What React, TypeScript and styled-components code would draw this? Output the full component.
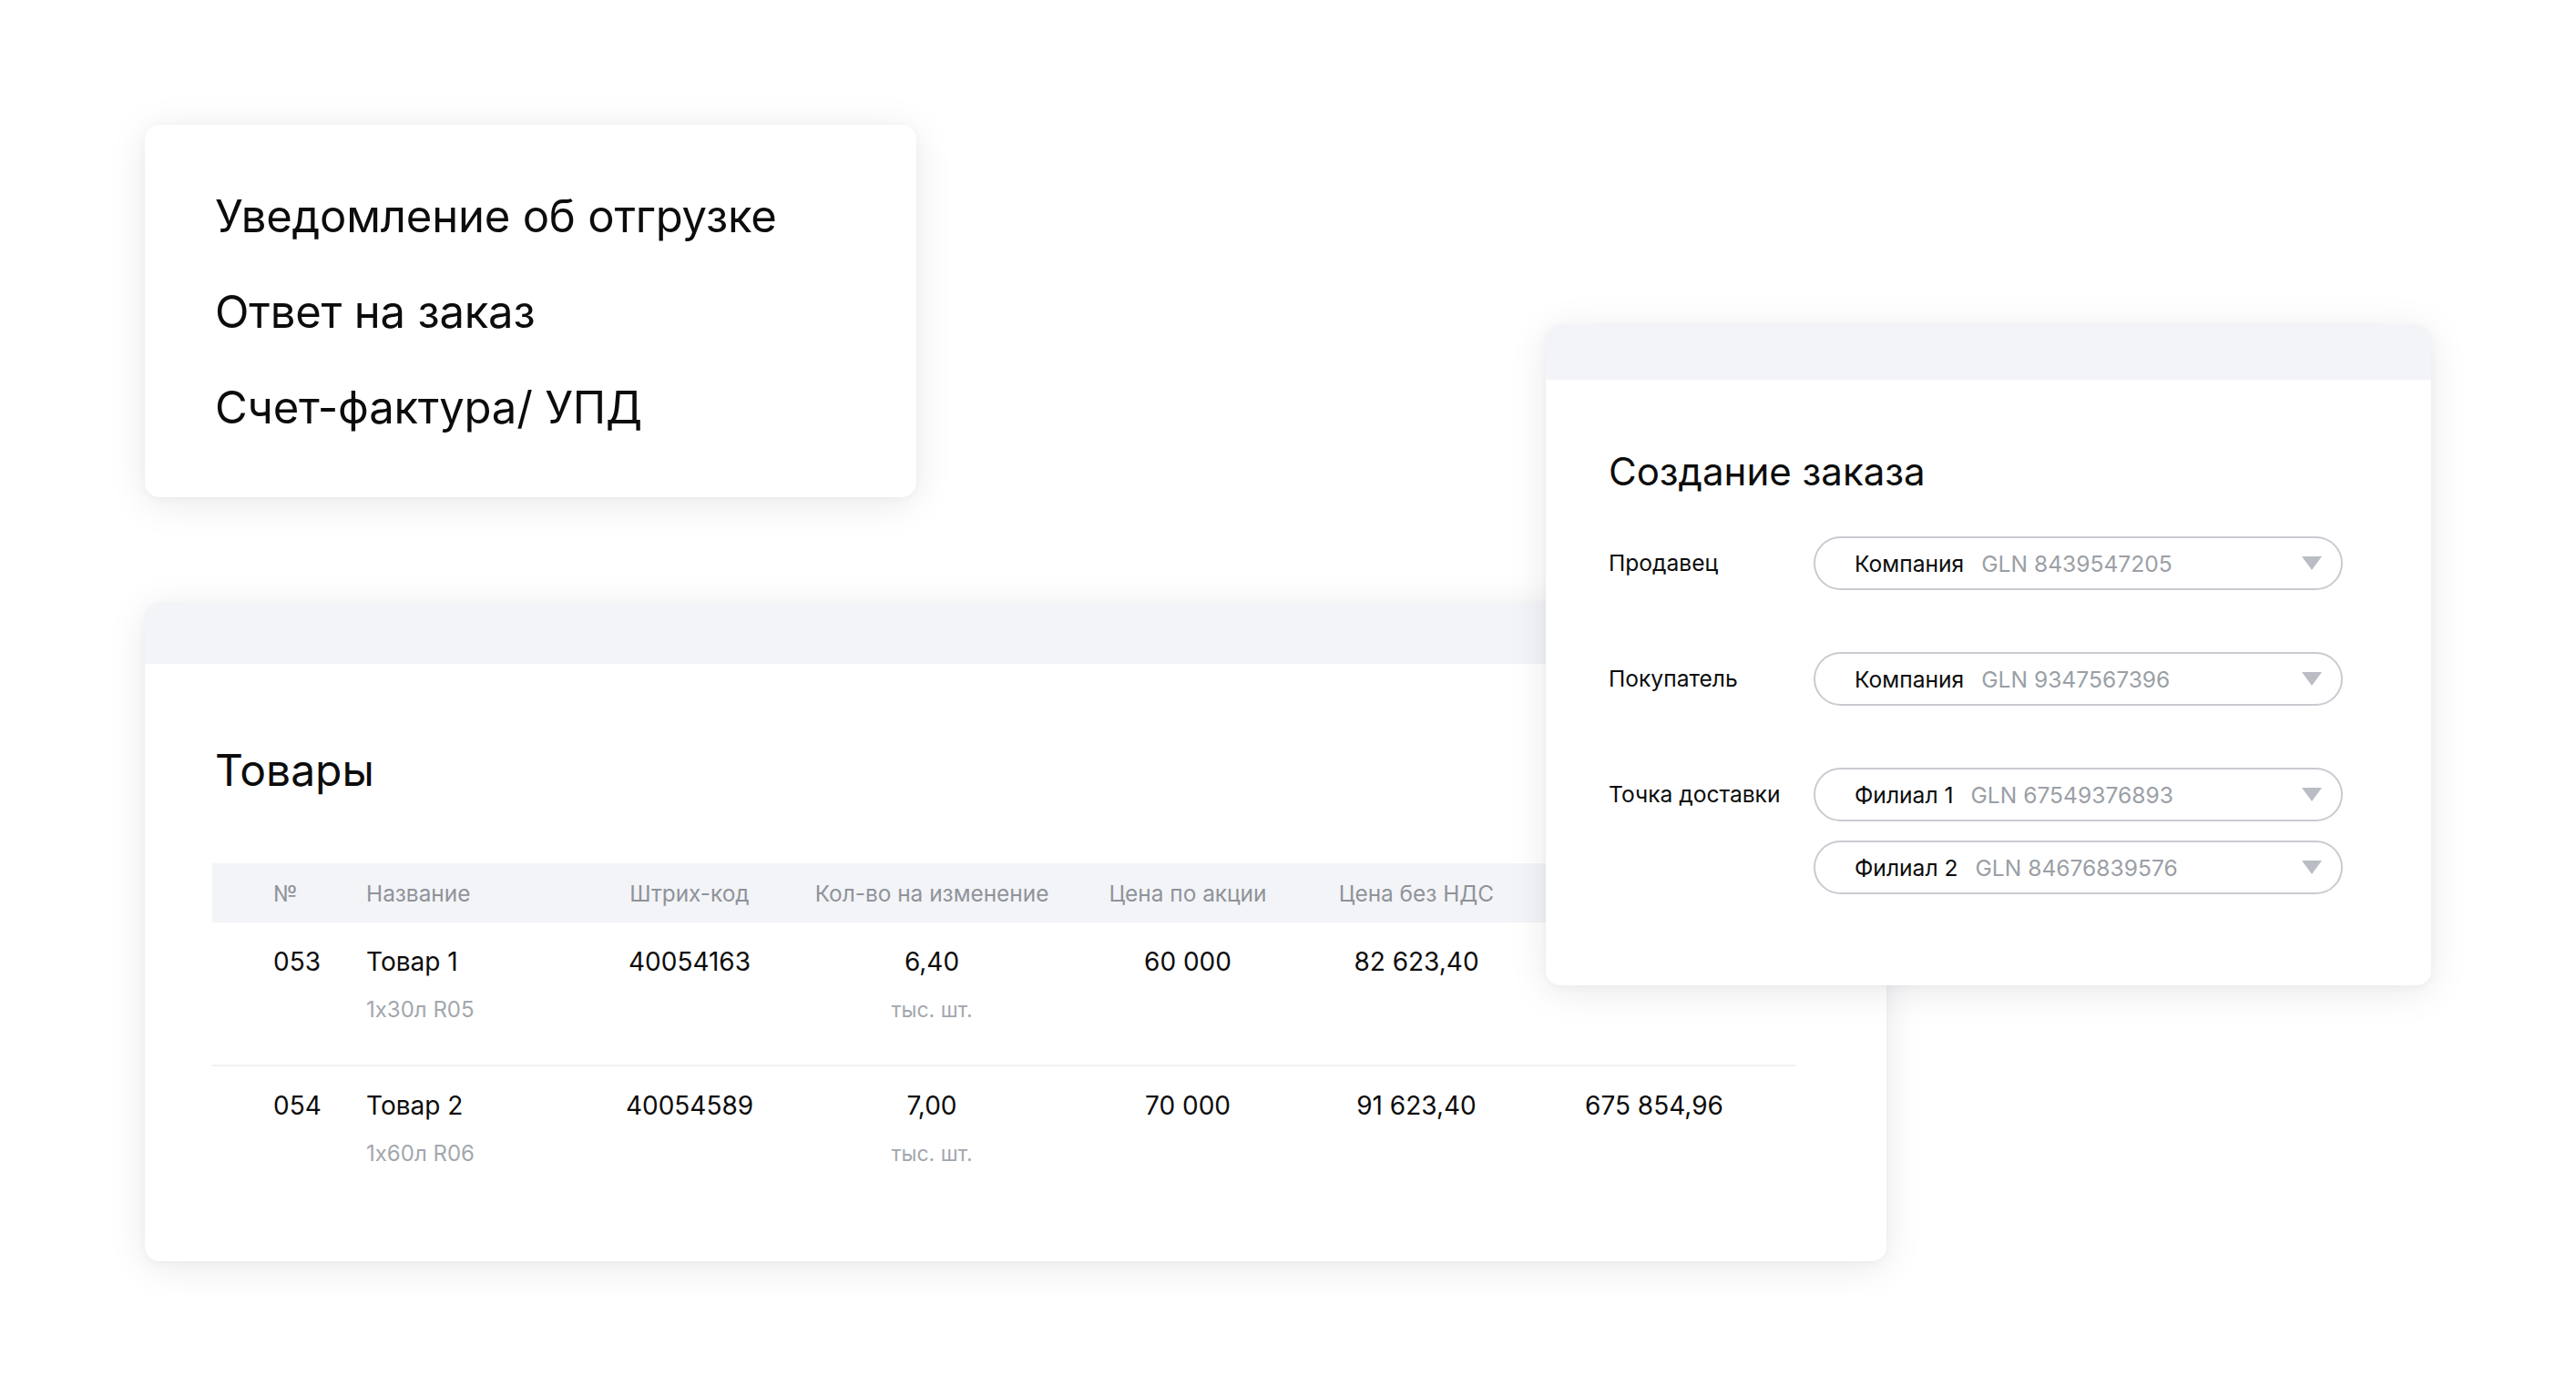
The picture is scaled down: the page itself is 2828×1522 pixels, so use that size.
import React from 'react'
import styled, { createGlobalStyle } from 'styled-components'

const GlobalStyle = createGlobalStyle`
  html, body {
    margin: 0;
    padding: 0;
    background: #ffffff;
  }
  body {
    font-family: Inter, "Noto Sans", "Liberation Sans", sans-serif;
    font-feature-settings: "calt" 0;
    color: #111111;
  }
`

const Canvas = styled.div`
  position: relative;
  width: 2828px;
  height: 1522px;
  overflow: hidden;
  background: #ffffff;
`

// windows on the canvas: each card is placed where it sits in the composition
const Card = styled.section<{ left: number; top: number; w: number; h: number; z?: number }>`
  position: absolute;
  left: ${p => p.left}px;
  top: ${p => p.top}px;
  width: ${p => p.w}px;
  height: ${p => p.h}px;
  z-index: ${p => p.z ?? 1};
  background: #ffffff;
  border-radius: 16px;
  box-shadow: 0 6px 44px rgba(20, 24, 40, 0.09), 0 2px 8px rgba(20, 24, 40, 0.04);
  overflow: hidden;
  display: flex;
  flex-direction: column;
  box-sizing: border-box;
`

const CardBand = styled.div<{ h: number }>`
  height: ${p => p.h}px;
  flex-shrink: 0;
  background: #f3f4f7;
`

/* ---------- document types ---------- */

const DocList = styled.ul`
  list-style: none;
  margin: 0;
  padding: 48px 0 0 77px;
  display: flex;
  flex-direction: column;
`

const DocItem = styled.li`
  font-size: 49px;
  line-height: 105px;
  font-weight: 400;
  color: #0c0c0c;
  letter-spacing: -0.2px;
`

/* ---------- goods table ---------- */

const GoodsBody = styled.div`
  padding: 0 100px 0 74px;
  display: flex;
  flex-direction: column;
`

const Title = styled.h2<{ size: number }>`
  margin: 0;
  font-size: ${p => p.size}px;
  line-height: ${p => Math.round(p.size * 1.25)}px;
  font-weight: 400;
  color: #0c0c0c;
`

const GoodsTitle = styled(Title)`
  margin: 87px 0 72px 3px;
`

const cols = '169px 250px 210px 322px 240px 262px 260px 1fr'

const HeadRow = styled.div`
  display: grid;
  grid-template-columns: ${cols};
  height: 65px;
  align-items: center;
  background: #f3f4f7;
  font-size: 24.4px;
  color: #8f939a;
`

const BodyRow = styled.div<{ divided?: boolean }>`
  display: grid;
  grid-template-columns: ${cols};
  padding: 26px 0 ${p => (p.divided ? 43 : 0)}px;
  border-bottom: ${p => (p.divided ? '2px solid #f0f1f4' : 'none')};
`

const Cell = styled.div<{ center?: boolean; first?: boolean }>`
  display: flex;
  flex-direction: column;
  align-items: ${p => (p.center ? 'center' : 'flex-start')};
  padding-left: ${p => (p.first ? 67 : 0)}px;
  white-space: nowrap;
`

const Main = styled.span`
  font-size: 28px;
  line-height: 34px;
  color: #0c0c0c;
`

const Sub = styled.span`
  margin-top: 19px;
  font-size: 24px;
  line-height: 34px;
  color: #a3a7ad;
`

const Unit = styled(Sub)`
  font-size: 23px;
`

/* ---------- order form ---------- */

const OrderBody = styled.div`
  padding: 0 0 0 69px;
  display: flex;
  flex-direction: column;
`

const OrderTitle = styled(Title)`
  margin: 74px 0 45px;
`

const Form = styled.div`
  display: grid;
  grid-template-columns: 225px 581px;
  row-gap: 68px;
`

const Label = styled.div`
  font-size: 24.6px;
  line-height: 59px;
  color: #0c0c0c;
  align-self: start;
`

const SelectStack = styled.div`
  display: flex;
  flex-direction: column;
  gap: 21px;
`

const Select = styled.div`
  height: 59px;
  box-sizing: border-box;
  border: 2px solid #c8cbd0;
  border-radius: 30px;
  display: flex;
  align-items: center;
  padding: 0 21px 0 43px;
  font-size: 24.6px;
  white-space: nowrap;
`

const SelectName = styled.span`
  color: #0c0c0c;
  margin-right: 19px;
`

const SelectGln = styled.span`
  color: #9b9fa6;
  flex: 1;
`

const Caret = () => (
  <svg width="22" height="15" viewBox="0 0 22 15">
    <path d="M0 0 H22 L11 15 Z" fill="#babdc3" />
  </svg>
)

const docs = ['Уведомление об отгрузке', 'Ответ на заказ', 'Счет-фактура/ УПД']

const goods = [
  { n: '053', name: 'Товар 1', pack: '1x30л R05', code: '40054163', qty: '6,40', promo: '60 000', net: '82 623,40', total: '675 854,96' },
  { n: '054', name: 'Товар 2', pack: '1x60л R06', code: '40054589', qty: '7,00', promo: '70 000', net: '91 623,40', total: '675 854,96' },
]

const heads = ['№', 'Название', 'Штрих-код', 'Кол-во на изменение', 'Цена по акции', 'Цена без НДС', 'Сумма', '']

type Option = { name: string; gln: string }

const SelectBox = ({ name, gln }: Option) => (
  <Select>
    <SelectName>{name}</SelectName>
    <SelectGln>GLN {gln}</SelectGln>
    <Caret />
  </Select>
)

export default function App() {
  return (
    <Canvas>
      <GlobalStyle />

      <Card left={159} top={137} w={847} h={409}>
        <DocList>
          {docs.map(d => (
            <DocItem key={d}>{d}</DocItem>
          ))}
        </DocList>
      </Card>

      <Card left={159} top={662} w={1912} h={723}>
        <CardBand h={67} />
        <GoodsBody>
          <GoodsTitle size={48}>Товары</GoodsTitle>
          <HeadRow>
            {heads.map((h, i) => (
              <Cell key={i} first={i === 0} center={i > 1}>
                {h}
              </Cell>
            ))}
          </HeadRow>
          {goods.map((g, i) => (
            <BodyRow key={g.n} divided={i === 0}>
              <Cell first>
                <Main>{g.n}</Main>
              </Cell>
              <Cell>
                <Main>{g.name}</Main>
                <Sub>{g.pack}</Sub>
              </Cell>
              <Cell center>
                <Main>{g.code}</Main>
              </Cell>
              <Cell center>
                <Main>{g.qty}</Main>
                <Unit>тыс. шт.</Unit>
              </Cell>
              <Cell center>
                <Main>{g.promo}</Main>
              </Cell>
              <Cell center>
                <Main>{g.net}</Main>
              </Cell>
              <Cell center>
                <Main>{g.total}</Main>
              </Cell>
              <Cell />
            </BodyRow>
          ))}
        </GoodsBody>
      </Card>

      <Card left={1697} top={357} w={972} h={725} z={2}>
        <CardBand h={60} />
        <OrderBody>
          <OrderTitle size={42}>Создание заказа</OrderTitle>
          <Form>
            <Label>Продавец</Label>
            <SelectBox name="Компания" gln="8439547205" />
            <Label>Покупатель</Label>
            <SelectBox name="Компания" gln="9347567396" />
            <Label>Точка доставки</Label>
            <SelectStack>
              <SelectBox name="Филиал 1" gln="67549376893" />
              <SelectBox name="Филиал 2" gln="84676839576" />
            </SelectStack>
          </Form>
        </OrderBody>
      </Card>
    </Canvas>
  )
}
